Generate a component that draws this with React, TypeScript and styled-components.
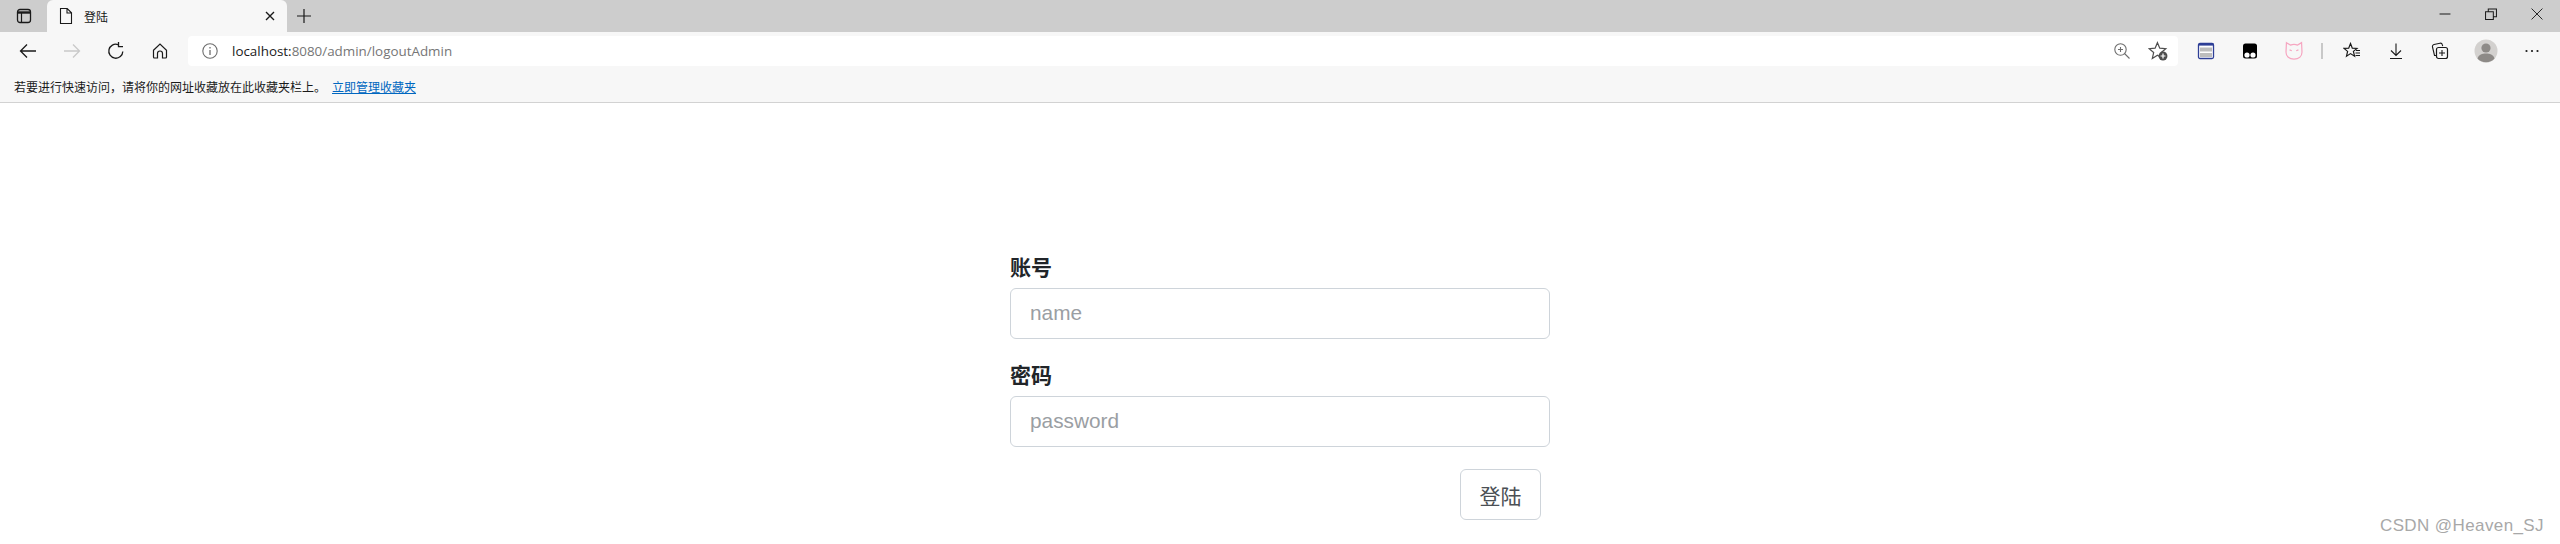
import * as React from 'react';
import styled, { createGlobalStyle } from 'styled-components';

const GlobalStyle = createGlobalStyle`
  html, body {
    margin: 0;
    padding: 0;
    background: #fff;
  }
  body {
    font-family: "Liberation Sans", "Noto Sans CJK SC", sans-serif;
  }
`;

const Page = styled.div`
  position: relative;
  width: 2560px;
  height: 544px;
  overflow: hidden;
  background: #fff;
`;

const TabStrip = styled.div`
  display: flex;
  align-items: flex-end;
  height: 32px;
  background: #cdcdcd;
`;

const SwitcherSlot = styled.div`
  display: flex;
  align-items: center;
  justify-content: center;
  width: 47px;
  height: 32px;
  color: #1a1a1a;
`;

const Tab = styled.div`
  display: flex;
  align-items: center;
  width: 240px;
  height: 32px;
  padding: 0 11px 0 10px;
  box-sizing: border-box;
  background: #f7f7f7;
  border-radius: 6px 6px 0 0;
  color: #1a1a1a;
`;

const TabTitle = styled.span`
  flex: 1;
  margin-left: 9px;
  font: 12px "Noto Sans CJK SC", sans-serif;
`;

const NewTab = styled.div`
  display: flex;
  align-items: center;
  justify-content: center;
  width: 34px;
  height: 32px;
  color: #1a1a1a;
`;

const WindowControls = styled.div`
  display: flex;
  align-self: flex-start;
  margin-left: auto;
  color: #1a1a1a;
`;

const WindowButton = styled.div`
  display: flex;
  align-items: center;
  justify-content: center;
  width: 46px;
  height: 28px;
`;

const Toolbar = styled.div`
  display: flex;
  align-items: center;
  height: 38px;
  padding: 2px 0;
  box-sizing: border-box;
  background: #f7f7f7;
`;

const NavGroup = styled.div`
  display: flex;
  padding-left: 6px;
  margin-right: 6px;
`;

const IconSlot = styled.div<{ $w?: number; $color?: string }>`
  display: flex;
  align-items: center;
  justify-content: center;
  width: ${(p) => p.$w ?? 44}px;
  height: 30px;
  color: ${(p) => p.$color ?? '#1a1a1a'};
`;

const AddressBar = styled.div`
  display: flex;
  align-items: center;
  width: 1990px;
  height: 30px;
  padding: 0 2px 0 12px;
  box-sizing: border-box;
  background: #fff;
  border-radius: 4px;
`;

const Url = styled.div`
  flex: 1;
  margin-left: 12px;
  font: 13.4px "Open Sans", sans-serif;
  color: #767676;
`;

const UrlHost = styled.span`
  color: #1a1a1a;
`;

const Separator = styled.div`
  width: 2px;
  height: 16px;
  margin: 0 7px 0 5px;
  background: #c8c8c8;
`;

const ToolGroup = styled.div`
  display: flex;
  align-items: center;
  padding-left: 6px;
`;

const BookmarkBar = styled.div`
  display: flex;
  align-items: center;
  height: 33px;
  padding-left: 14px;
  box-sizing: border-box;
  background: #f7f7f7;
  border-bottom: 1px solid #d2d2d2;
  font: 12px "Noto Sans CJK SC", sans-serif;
  color: #1a1a1a;
`;

const BookmarkLink = styled.a`
  margin-left: 6px;
  color: #0067c0;
  text-decoration: underline;
`;

const FormWrap = styled.form`
  display: flex;
  flex-direction: column;
  width: 540px;
  margin-left: 1010px;
  padding-top: 150px;
`;

const Field = styled.div`
  display: flex;
  flex-direction: column;
  margin-bottom: 22px;
`;

const Label = styled.label`
  height: 35px;
  font: 700 21px/27px "Noto Sans CJK SC", sans-serif;
  color: #212529;
`;

const Input = styled.input`
  height: 51px;
  padding: 0 19px 2px;
  box-sizing: border-box;
  border: 1px solid #ced4da;
  border-radius: 6px;
  font: 20.8px "Liberation Sans", sans-serif;
  color: #495057;
  outline: none;

  &::placeholder {
    color: #9a9ea3;
    opacity: 1;
  }
`;

const Actions = styled.div`
  display: flex;
  justify-content: flex-end;
  padding-right: 9px;
`;

const SubmitButton = styled.button`
  width: 81px;
  height: 51px;
  padding: 0;
  border: 1px solid #ced4da;
  border-radius: 6px;
  background: #fff;
  font: 21px "Noto Sans CJK SC", sans-serif;
  color: #4a4f54;
`;

const Watermark = styled.div`
  position: absolute;
  right: 16px;
  bottom: 8px;
  font: 17px "Liberation Sans", sans-serif;
  letter-spacing: 0.4px;
  color: #a8a8a8;
`;

const Ico: React.FC<{ size?: number; children: React.ReactNode }> = ({ size = 18, children }) => (
  <svg width={size} height={size} viewBox="0 0 18 18" fill="none" stroke="currentColor" strokeWidth={1.1}>
    {children}
  </svg>
);

export default function App() {
  return (
    <Page>
      <GlobalStyle />
      <TabStrip>
        <SwitcherSlot>
          <Ico>
            <rect x="2.5" y="2.5" width="13" height="13" rx="2.5" strokeWidth="1.3" />
            <path d="M2.5 5.5h13" strokeWidth="2.4" />
            <path d="M6.5 6v9" strokeWidth="1.2" />
          </Ico>
        </SwitcherSlot>
        <Tab>
          <Ico>
            <path d="M3.5 1.5h6.700L14.500 5.800v10.700h-11zM10 1.500v4.500h4.500" />
          </Ico>
          <TabTitle>登陆</TabTitle>
          <Ico size={12}>
            <path d="M3 3l12 12M15 3L3 15" strokeWidth="2" />
          </Ico>
        </Tab>
        <NewTab>
          <Ico>
            <path d="M9 2v14M2 9h14" strokeWidth="1.2" />
          </Ico>
        </NewTab>
        <WindowControls>
          <WindowButton>
            <Ico size={14}>
              <path d="M2 9h14" strokeWidth="1.3" />
            </Ico>
          </WindowButton>
          <WindowButton>
            <Ico size={14}>
              <path d="M2 6h10v10H2zM5.500 6V2.500H16v10h-4" strokeWidth="1.3" />
            </Ico>
          </WindowButton>
          <WindowButton>
            <Ico size={14}>
              <path d="M2 2l14 14M16 2L2 16" strokeWidth="1.2" />
            </Ico>
          </WindowButton>
        </WindowControls>
      </TabStrip>
      <Toolbar>
        <NavGroup>
          <IconSlot>
            <Ico>
              <path d="M17 9H1.500M8 2.500L1.500 9 8 15.500" strokeWidth="1.3" />
            </Ico>
          </IconSlot>
          <IconSlot $color="#c9c9c9">
            <Ico>
              <path d="M1 9h15.500M10 2.500L16.500 9 10 15.500" strokeWidth="1.3" />
            </Ico>
          </IconSlot>
          <IconSlot>
            <Ico>
              <path d="M15.800 9.500A7 7 0 1 1 11 2.600" strokeWidth="1.3" />
              <path d="M11.500 0v4.600H16" strokeWidth="1.3" />
            </Ico>
          </IconSlot>
          <IconSlot>
            <Ico>
              <path d="M2.500 8.300L9 2l6.500 6.300V15a1 1 0 0 1-1 1h-3V11.500a2.500 2.500 0 0 0-5 0V16h-3a1 1 0 0 1-1-1z" strokeWidth="1.2" />
            </Ico>
          </IconSlot>
        </NavGroup>
        <AddressBar>
          <IconSlot $w={20} $color="#6e6e6e">
            <Ico>
              <circle cx="9" cy="9" r="7.200" />
              <path d="M9 8v5M9 5v1.400" strokeWidth="1.3" />
            </Ico>
          </IconSlot>
          <Url>
            <UrlHost>localhost:</UrlHost>8080/admin/logoutAdmin
          </Url>
          <IconSlot $w={36} $color="#6e6e6e">
            <Ico>
              <circle cx="7.500" cy="7.500" r="5.700" />
              <path d="M11.500 11.500l5 5M7.500 5v5M5 7.500h5" />
            </Ico>
          </IconSlot>
          <IconSlot $w={36} $color="#4e4e4e">
            <Ico size={20}>
              <path d="M8.500 1.500l2.100 5 5.400.4-4.100 3.500 1.300 5.300-4.700-2.900-4.600 2.900 1.200-5.300L1 6.900l5.400-.4z" />
              <circle cx="13.500" cy="13.500" r="4" fill="currentColor" stroke="none" />
              <path d="M13.500 11.300v4.400M11.300 13.500h4.400" stroke="#fff" strokeWidth="1.1" />
            </Ico>
          </IconSlot>
        </AddressBar>
        <ToolGroup>
          <IconSlot>
            <Ico>
              <rect x="1.500" y="1.500" width="15" height="15" rx="1.500" fill="#fff" stroke="#2e3f96" strokeWidth="1.3" />
              <path d="M1.500 2.600h15" stroke="#2e3f96" strokeWidth="2" />
              <rect x="3" y="5.500" width="12" height="4" fill="#bdbdbd" stroke="none" />
              <rect x="3" y="11" width="12" height="4" fill="#bdbdbd" stroke="none" />
            </Ico>
          </IconSlot>
          <IconSlot>
            <Ico>
              <rect x="2" y="1.500" width="14" height="15" rx="2.500" fill="#000" stroke="none" />
              <circle cx="6" cy="13" r="2.600" fill="#fff" stroke="none" />
              <circle cx="12" cy="13" r="2.600" fill="#fff" stroke="none" />
            </Ico>
          </IconSlot>
          <IconSlot $color="#f6a6c1">
            <Ico size={20}>
              <path d="M2.200 1.500l3.600 2.200a8 8 0 0 1 6.400 0l3.600-2.200.4 8.500c0 4-3 6.300-7.200 6.300S1.800 14 1.800 10z" />
              <path d="M5 8l2 .8M13 8l-2 .8" />
            </Ico>
          </IconSlot>
          <Separator />
          <IconSlot>
            <Ico>
              <path d="M7.500 1.500l1.800 4.600 4.700.3-3.600 3 1.200 4.800-4.100-2.600-4 2.600 1.100-4.800L1 6.400l4.700-.3z" strokeWidth="1.2" />
              <path d="M13 8.500h4M12.500 11h4.500M12.500 13.500h4.500" />
            </Ico>
          </IconSlot>
          <IconSlot>
            <Ico>
              <path d="M9 1.500v11.500M4 8.500l5 5 5-5M3 16.500h12" />
            </Ico>
          </IconSlot>
          <IconSlot>
            <Ico>
              <path d="M6 13.500H3.500L1.500 5a2 2 0 0 1 1.500-2.500l6-1.300a2 2 0 0 1 2.300 1.500l.4 1.500" />
              <rect x="5.500" y="5.500" width="11" height="11" rx="2" fill="#f7f7f7" strokeWidth="1.2" />
              <path d="M11 8v6M8 11h6" />
            </Ico>
          </IconSlot>
          <IconSlot $w={48}>
            <svg width="24" height="24" viewBox="0 0 24 24">
              <circle cx="12" cy="12" r="11.500" fill="#d3d1cf" />
              <circle cx="12" cy="9" r="4.600" fill="#8d8a87" />
              <path d="M3.500 19.500c1-4 5-5 8.500-5s7.500 1 8.500 5a11.500 11.500 0 0 1-17 0z" fill="#8d8a87" />
            </svg>
          </IconSlot>
          <IconSlot>
            <Ico>
              <circle cx="3.500" cy="9" r="1.100" fill="currentColor" stroke="none" />
              <circle cx="9" cy="9" r="1.100" fill="currentColor" stroke="none" />
              <circle cx="14.500" cy="9" r="1.100" fill="currentColor" stroke="none" />
            </Ico>
          </IconSlot>
        </ToolGroup>
      </Toolbar>
      <BookmarkBar>
        若要进行快速访问，请将你的网址收藏放在此收藏夹栏上。
        <BookmarkLink>立即管理收藏夹</BookmarkLink>
      </BookmarkBar>
      <FormWrap>
        <Field>
          <Label>账号</Label>
          <Input placeholder="name" />
        </Field>
        <Field>
          <Label>密码</Label>
          <Input placeholder="password" type="password" />
        </Field>
        <Actions>
          <SubmitButton type="button">登陆</SubmitButton>
        </Actions>
      </FormWrap>
      <Watermark>CSDN @Heaven_SJ</Watermark>
    </Page>
  );
}
